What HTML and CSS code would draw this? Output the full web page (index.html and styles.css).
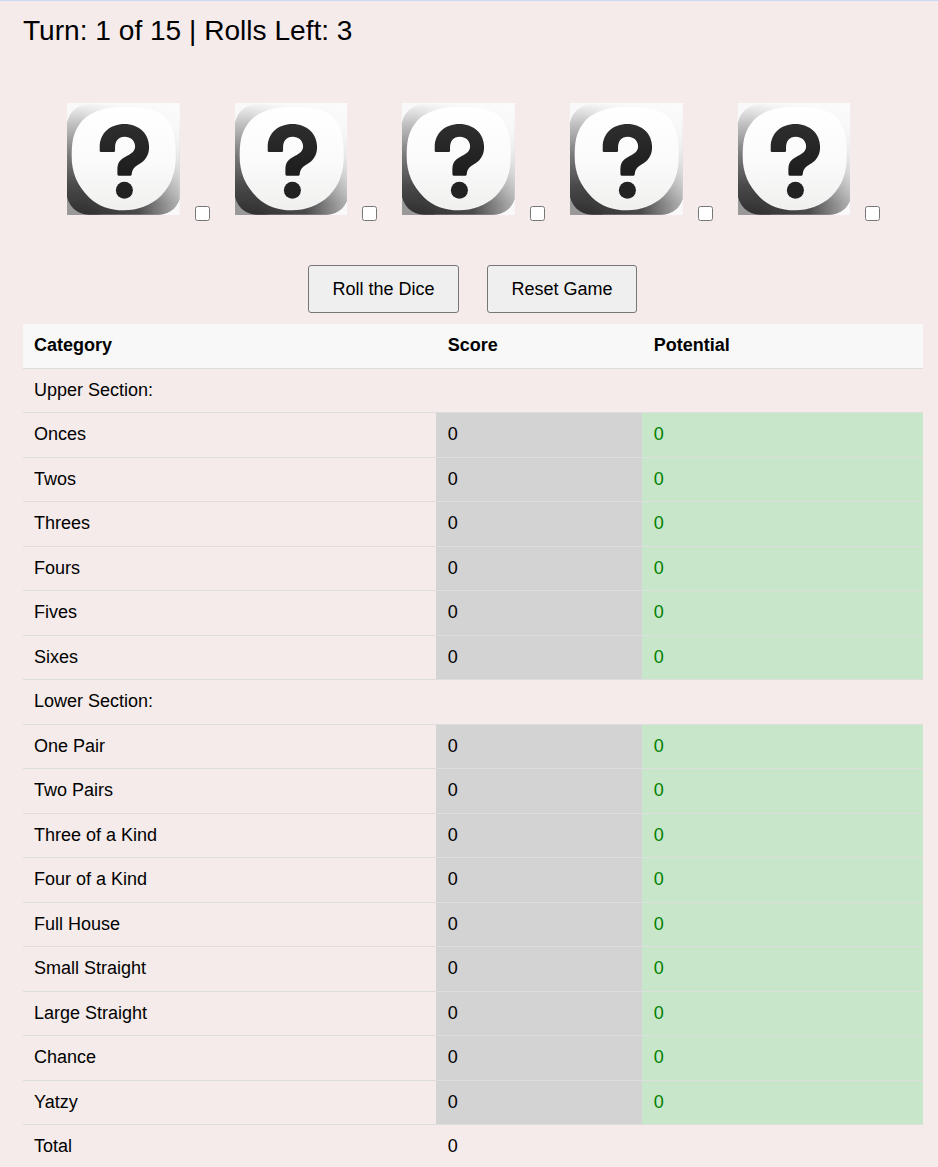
FILE: index.html
```html
<!DOCTYPE html>
<html lang="en">
<head>
<meta charset="utf-8">
<title>Yatzy</title>
<link rel="stylesheet" href="styles.css">
</head>
<body>
<svg class="defs" width="0" height="0" aria-hidden="true">
  <defs>
    <linearGradient id="side" x1="0" y1="0" x2="0" y2="1">
      <stop offset="0" stop-color="#f2f2f2"/><stop offset=".16" stop-color="#c6c6c6"/>
      <stop offset=".45" stop-color="#7c7c7c"/><stop offset=".75" stop-color="#484848"/>
      <stop offset="1" stop-color="#303030"/>
    </linearGradient>
    <linearGradient id="light" gradientUnits="userSpaceOnUse" x1="60" y1="0" x2="338" y2="0">
      <stop offset="0" stop-color="#fff" stop-opacity="0"/><stop offset=".55" stop-color="#fff" stop-opacity=".12"/>
      <stop offset="1" stop-color="#fff" stop-opacity=".62"/>
    </linearGradient>
    <linearGradient id="glow" gradientUnits="userSpaceOnUse" x1="40" y1="0" x2="180" y2="0">
      <stop offset="0" stop-color="#fbfbfb" stop-opacity="0"/><stop offset="1" stop-color="#fbfbfb" stop-opacity=".9"/>
    </linearGradient>
    <linearGradient id="glowRight" gradientUnits="userSpaceOnUse" x1="0" y1="60" x2="0" y2="300">
      <stop offset="0" stop-color="#fbfbfb" stop-opacity=".9"/><stop offset=".35" stop-color="#fbfbfb" stop-opacity=".7"/>
      <stop offset="1" stop-color="#fbfbfb" stop-opacity="0"/>
    </linearGradient>
    <linearGradient id="face" x1="0" y1="0" x2="0" y2="1">
      <stop offset="0" stop-color="#fff"/><stop offset=".5" stop-color="#fbfbfb"/><stop offset="1" stop-color="#f0f0ef"/>
    </linearGradient>
    <linearGradient id="ink" x1="0" y1="0" x2="0" y2="1">
      <stop offset="0" stop-color="#2e2e2e"/><stop offset="1" stop-color="#1d1d1d"/>
    </linearGradient>
    <filter id="soft"><feGaussianBlur stdDeviation="2"/></filter>
    <symbol id="die" viewBox="0 0 338 336" preserveAspectRatio="none">
      <rect width="338" height="336" fill="#f9f9f9"/>
      <path d="M0 260V336H100Z" fill="#999"/>
      <g filter="url(#soft)">
        <rect x="-1" y="4" width="341" height="331" rx="66" fill="url(#side)"/>
        <rect x="-1" y="4" width="341" height="331" rx="66" fill="url(#light)"/>
      </g>
      <rect width="338" height="60" fill="url(#glow)"/>
      <rect x="200" y="60" width="138" height="276" fill="url(#glowRight)"/>
      <path d="M170 12C230 12 268 18 296 44C322 70 326 115 326 160C326 208 313 247 281 279C250 308 212 322 170 322C128 322 94 309 67 284C30 248 14 208 14 160C14 120 18 92 36 66C60 28 110 12 170 12Z" fill="url(#face)" filter="url(#soft)"/>
      <path d="M98 143V132C98 90 130 63 172 63C215 63 246 92 246 132C246 160 232 175 212 186C199 194 195 202 194 214Q194 218 190 218H155Q151 218 151 214V198C151 178 160 170 174 162C192 152 204 147 204 130C204 112 190 101 173 101C154 101 144 114 144 134V143Q144 147 140 147H102Q98 147 98 143Z" fill="url(#ink)"/>
      <circle cx="172" cy="262" r="25.5" fill="#222"/>
    </symbol>
  </defs>
</svg>
<main class="game">
  <h1 class="status">Turn: 1 of 15 | Rolls Left: 3</h1>
  <div class="dice">
    <label class="slot"><svg class="die"><use href="#die"/></svg><input class="hold" type="checkbox"></label>
    <label class="slot"><svg class="die"><use href="#die"/></svg><input class="hold" type="checkbox"></label>
    <label class="slot"><svg class="die"><use href="#die"/></svg><input class="hold" type="checkbox"></label>
    <label class="slot"><svg class="die"><use href="#die"/></svg><input class="hold" type="checkbox"></label>
    <label class="slot"><svg class="die"><use href="#die"/></svg><input class="hold" type="checkbox"></label>
  </div>
  <div class="actions">
    <button class="btn roll">Roll the Dice</button>
    <button class="btn reset">Reset Game</button>
  </div>
  <table class="scores">
    <colgroup><col class="c-name"><col class="c-score"><col class="c-potential"></colgroup>
    <tbody>
    <tr class="head"><th>Category</th><th>Score</th><th>Potential</th></tr>
    <tr><td colspan="3">Upper Section:</td></tr>
    <tr><td>Onces</td><td class="score">0</td><td class="potential">0</td></tr>
    <tr><td>Twos</td><td class="score">0</td><td class="potential">0</td></tr>
    <tr><td>Threes</td><td class="score">0</td><td class="potential">0</td></tr>
    <tr><td>Fours</td><td class="score">0</td><td class="potential">0</td></tr>
    <tr><td>Fives</td><td class="score">0</td><td class="potential">0</td></tr>
    <tr><td>Sixes</td><td class="score">0</td><td class="potential">0</td></tr>
    <tr><td colspan="3">Lower Section:</td></tr>
    <tr><td>One Pair</td><td class="score">0</td><td class="potential">0</td></tr>
    <tr><td>Two Pairs</td><td class="score">0</td><td class="potential">0</td></tr>
    <tr><td>Three of a Kind</td><td class="score">0</td><td class="potential">0</td></tr>
    <tr><td>Four of a Kind</td><td class="score">0</td><td class="potential">0</td></tr>
    <tr><td>Full House</td><td class="score">0</td><td class="potential">0</td></tr>
    <tr><td>Small Straight</td><td class="score">0</td><td class="potential">0</td></tr>
    <tr><td>Large Straight</td><td class="score">0</td><td class="potential">0</td></tr>
    <tr><td>Chance</td><td class="score">0</td><td class="potential">0</td></tr>
    <tr><td>Yatzy</td><td class="score">0</td><td class="potential">0</td></tr>
    <tr><td>Total</td><td>0</td><td></td></tr>
    </tbody>
  </table>
</main>
</body>
</html>
```
FILE: styles.css
```css
* { box-sizing: border-box; }
html { overflow: hidden; }
body {
  margin: 0;
  height: 1167px;
  overflow: hidden;
  background: #f5ebea;
  border-top: 1px solid #c8daf5;
  font: 18px/21px "Liberation Sans", Arial, sans-serif;
  color: #000;
}
.defs { display: block; height: 0; }
.game { padding: 14px 15px 0 23px; }
.status { margin: 0; font-size: 28.1px; line-height: 32px; font-weight: 400; }
.dice {
  display: grid;
  grid-template-columns: repeat(5, 167.65px);
  padding: 56px 0 0 44px;
}
.slot { display: flex; align-items: flex-end; height: 118px; }
.die { width: 112.8px; height: 112px; margin-bottom: 6px; }
.hold { width: 15px; height: 15px; margin: 0 0 0 15px; }
.actions { display: flex; gap: 28px; padding: 44px 0 11px 285px; }
.btn {
  height: 48px;
  padding: 0;
  border: 1px solid #767676;
  border-radius: 3px;
  background: #efefef;
  font: inherit;
  color: inherit;
}
.roll { width: 151px; }
.reset { width: 150px; }
.scores { width: 900px; table-layout: fixed; border-collapse: separate; border-spacing: 0; }
.c-name { width: 413px; }
.c-score { width: 206px; }
.c-potential { width: 281px; }
.scores th, .scores td {
  height: 44px;
  padding: 11px 11px 0;
  border-bottom: 1px solid #ddd;
  text-align: left;
  vertical-align: top;
}
.scores tr > * + * { padding-left: 11.7px; }
.scores tr:nth-child(odd) > * { height: 45px; }
.head th { background: #f8f8f8; }
.scores .score { background: #d3d3d3; }
.scores .potential { background: #c8e6c9; color: green; }
```
